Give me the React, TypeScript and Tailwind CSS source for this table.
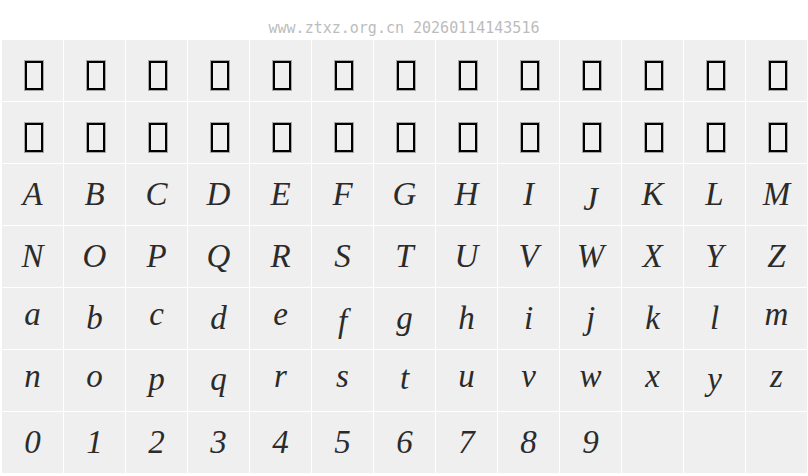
const upper = "ABCDEFGHIJKLMNOPQRSTUVWXYZ".split("");
const lower = "abcdefghijklmnopqrstuvwxyz".split("");
const digits = "0123456789".split("");

// nudges so each glyph sits where the specimen puts it
const nudge: Record<string, string> = {
  J: "mt-[10px]",
  a: "mb-[9px]",
  c: "mb-[9px]",
  e: "mb-[9px]",
  m: "mb-[9px]",
  n: "mb-[9px]",
  o: "mb-[9px]",
  r: "mb-[9px]",
  s: "mb-[9px]",
  u: "mb-[9px]",
  v: "mb-[9px]",
  w: "mb-[9px]",
  x: "mb-[9px]",
  z: "mb-[9px]",
  t: "mb-[5px]",
  f: "mt-[6px]",
  p: "mb-[2px]",
  q: "mb-[2px]",
  y: "mb-[2px]",
};

function Tofu() {
  return (
    <div className="ml-[2px] mt-[9px] h-[29px] w-[18px] border-2 border-black shadow-[0_0_0_1px_rgba(0,0,0,0.3)]" />
  );
}

function Cell({ ch }: { ch?: string }) {
  return (
    <div className="flex h-[61px] items-center justify-center bg-[#efefef]">
      {ch && (
        <span
          className={`font-['Liberation_Serif',serif] text-[33px] italic leading-none text-[#2b2b2b] ${nudge[ch] ?? ""}`}
        >
          {ch}
        </span>
      )}
    </div>
  );
}

export default function App() {
  const tofuCells = Array.from({ length: 26 });

  return (
    <div className="h-[476px] w-[808px] bg-white">
      {/* header stamp */}
      <div className="h-[40px] pt-[19px] text-center font-['DejaVu_Sans_Mono',monospace] text-[15px] leading-[18px] text-[#bcbcbc]">
        www.ztxz.org.cn 20260114143516
      </div>

      {/* glyph grid */}
      <div className="grid grid-cols-[repeat(13,61px)] gap-px pl-[2px]">
        {tofuCells.map((_, i) => (
          <div key={`t${i}`} className="flex h-[61px] items-center justify-center bg-[#efefef]">
            <Tofu />
          </div>
        ))}
        {upper.map((c) => (
          <Cell key={c} ch={c} />
        ))}
        {lower.map((c) => (
          <Cell key={c} ch={c} />
        ))}
        {digits.map((c) => (
          <Cell key={c} ch={c} />
        ))}
        <Cell />
        <Cell />
        <Cell />
      </div>
    </div>
  );
}
